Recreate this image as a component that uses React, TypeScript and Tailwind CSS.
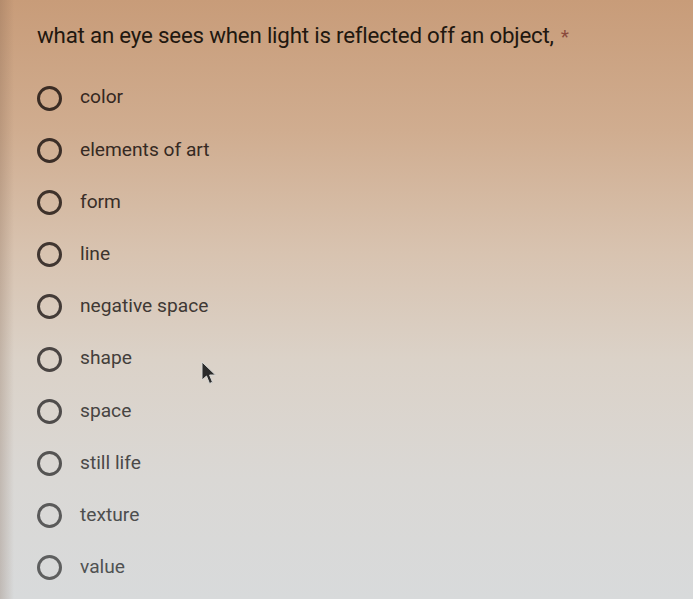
const options = [
  { label: "color", text: "text-[#34271f]", ring: "border-[#3a2c24]" },
  { label: "elements of art", text: "text-[#362a23]", ring: "border-[#3b2e27]" },
  { label: "form", text: "text-[#392e28]", ring: "border-[#3e322b]" },
  { label: "line", text: "text-[#3c332e]", ring: "border-[#403631]" },
  { label: "negative space", text: "text-[#3f3834]", ring: "border-[#433b37]" },
  { label: "shape", text: "text-[#433e3b]", ring: "border-[#4a4543]" },
  { label: "space", text: "text-[#474442]", ring: "border-[#4f4c4b]" },
  { label: "still life", text: "text-[#4a4948]", ring: "border-[#555453]" },
  { label: "texture", text: "text-[#4d4e4e]", ring: "border-[#5a5a5a]" },
  { label: "value", text: "text-[#505252]", ring: "border-[#5e5f5f]" },
]

function Cursor() {
  return (
    <svg className="absolute left-[200px] top-[361px]" width="18" height="25" viewBox="0 0 18 25">
      <path
        d="M2 1 L2 19 L6.5 15 L9.5 22.5 L12.5 21.2 L9.6 14 L15.5 14 Z"
        fill="#2b2b2b"
        stroke="#d8d8d6"
        strokeWidth="1"
        strokeLinejoin="round"
      />
    </svg>
  )
}

export default function App() {
  return (
    <div className="relative h-[599px] w-[693px] overflow-hidden bg-[linear-gradient(180deg,#c89c79_0%,#d0ad90_22%,#d8c3b0_42%,#dbd2c8_60%,#dad8d5_80%,#d8dadb_100%)] font-['Roboto','Liberation_Sans',sans-serif]">
      <div className="pointer-events-none absolute inset-y-0 left-0 w-[14px] bg-[linear-gradient(90deg,rgba(120,90,70,0.25),rgba(120,90,70,0))]" />
      <div className="px-[37px] pt-[21px]">
        <h1 className="text-[22.3px] leading-[28px] tracking-[-0.2px] text-[#21170f]">
          what an eye sees when light is reflected off an object,
          <span className="ml-[7px] text-[19px] text-[#8a4a3c]">*</span>
        </h1>
      </div>
      <div className="mt-[21px] flex flex-col pl-[37px]">
        {options.map((o) => (
          <label key={o.label} className="flex h-[52.2px] items-center">
            <span className={`h-[25px] w-[25px] shrink-0 rounded-full border-[3px] ${o.ring}`} />
            <span className={`ml-[18px] -translate-y-[1px] text-[19.2px] leading-none ${o.text}`}>
              {o.label}
            </span>
          </label>
        ))}
      </div>
      <Cursor />
    </div>
  )
}
